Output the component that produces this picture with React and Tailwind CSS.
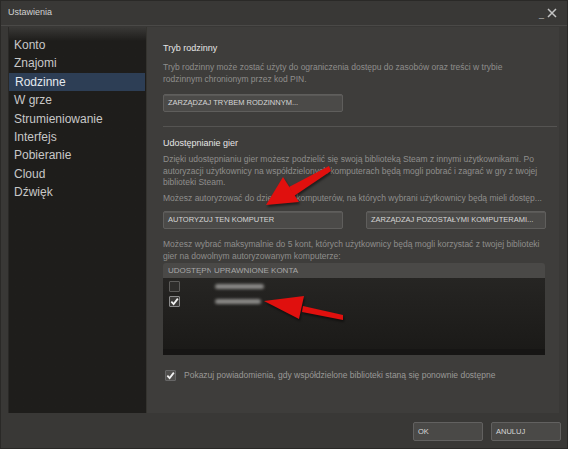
import React from 'react'

const font = { fontFamily: '"Liberation Sans", Arial, sans-serif' }

function Btn({ children, className = "" }) {
  return (
    <div className={"h-[18px] flex items-center px-[4px] bg-[#4b4a48] border border-[#5f5e5c] rounded-[2px] text-[7.5px] text-[#d6d6d6] shadow-[inset_0_1px_0_#5a5957] " + className}>
      {children}
    </div>
  )
}

function Check({ checked, className = "" }) {
  return (
    <div className={"w-[11px] h-[11px] border border-[#5d5c5a] rounded-[1px] flex items-center justify-center " + className}>
      {checked && (
        <svg width="9" height="9" viewBox="0 0 10 10">
          <path d="M1.5 5.2 L4 7.8 L8.7 1.8" fill="none" stroke="#f2f2f2" strokeWidth="2" />
        </svg>
      )}
    </div>
  )
}

const menu = ["Konto", "Znajomi", "Rodzinne", "W grze", "Strumieniowanie", "Interfejs", "Pobieranie", "Cloud", "Dźwięk"]

export default function App() {
  return (
    <div className="relative w-[568px] h-[449px] bg-[#393836] flex flex-col overflow-hidden border border-[#2a2927]" style={font}>
      {/* title bar */}
      <div className="h-[25px] flex items-center justify-between pl-[7px] pr-[10px] border-b border-[#4a4947]">
        <span className="text-[9px] text-[#d2d2d2]">Ustawienia</span>
        <div className="flex items-center gap-[3px] text-[#bdbdbd]">
          <span className="text-[9px] leading-none mt-[3px]">_</span>
          <svg width="10" height="10" viewBox="0 0 10 10">
            <path d="M1 1 L9 9 M9 1 L1 9" stroke="#c4c4c4" strokeWidth="1.5" />
          </svg>
        </div>
      </div>

      <div className="flex h-[387px] pl-[7px] pr-[8px] pt-[1px]">
        {/* sidebar */}
        <div className="w-[139px] bg-[#1e1d1b] border-r border-[#34332f] pt-[9px] bg-gradient-to-b from-[#3a3937] from-[0px] to-[#1e1d1b] to-[14px] shadow-[inset_1px_0_0_#2a2927]">
          {menu.map((m) => (
            <div
              key={m}
              className={
                "h-[18.4px] leading-[18.4px] pl-[6px] text-[12px] " +
                (m === "Rodzinne" ? "bg-[#2d3e55] text-[#e4e9ef] mx-[1px] pl-[5px]" : "text-[#c8c8c8]")
              }
            >
              {m}
            </div>
          ))}
        </div>

        {/* content */}
        <div className="flex-1 bg-[#3e3d3b] pl-[16px] pt-[15px] pr-[13px] flex flex-col">
          <div className="text-[9px] leading-[12px] text-[#e6e6e6]">Tryb rodzinny</div>
          <div className="mt-[7px] text-[8.5px] leading-[12px] text-[#8f8e8c] pr-[40px]">
            Tryb rodzinny może zostać użyty do ograniczenia dostępu do zasobów oraz treści w trybie rodzinnym chronionym przez kod PIN.
          </div>
          <Btn className="mt-[9px] w-[180px]">ZARZĄDZAJ TRYBEM RODZINNYM...</Btn>
          <div className="mt-[14px] h-px bg-[#555452] -mr-[11px]" />

          <div className="mt-[10px] text-[9px] leading-[12px] text-[#e6e6e6]">Udostępnianie gier</div>
          <div className="mt-[5px] text-[8.5px] leading-[11.7px] text-[#8f8e8c]">
            Dzięki udostępnianiu gier możesz podzielić się swoją biblioteką Steam z innymi użytkownikami. Po autoryzacji użytkownicy na współdzielonych komputerach będą mogli pobrać i zagrać w gry z twojej biblioteki Steam.
          </div>
          <div className="mt-[3px] text-[8.5px] leading-[12px] text-[#8f8e8c] whitespace-nowrap">
            Możesz autoryzować do dziesięciu komputerów, na których wybrani użytkownicy będą mieli dostęp...
          </div>
          <div className="mt-[7px] flex gap-[23px]">
            <Btn className="w-[180px]">AUTORYZUJ TEN KOMPUTER</Btn>
            <Btn className="w-[180px]">ZARZĄDZAJ POZOSTAŁYMI KOMPUTERAMI...</Btn>
          </div>
          <div className="mt-[9px] text-[8.5px] leading-[12px] text-[#8f8e8c] pr-[4px]">
            Możesz wybrać maksymalnie do 5 kont, których użytkownicy będą mogli korzystać z twojej biblioteki gier na dowolnym autoryzowanym komputerze:
          </div>

          {/* table */}
          <div className="mt-[1px] w-[382px]">
            <div className="h-[15px] bg-[#4a4947] rounded-t-[3px] flex items-center text-[8px] text-[#a8a8a8]">
              <span className="w-[48px] pl-[5px] overflow-hidden whitespace-nowrap">UDOSTĘPNI</span>
              <span className="pl-[3px]">UPRAWNIONE KONTA</span>
            </div>
            <div className="h-[77px] bg-gradient-to-b from-[#262523] to-[#1b1a18] border-b-[6px] border-[#161514] pt-[3px] flex flex-col gap-[4px]">
              <div className="flex items-center h-[11px]">
                <Check className="ml-[6px] bg-[#2e2d2b]" />
                <div className="ml-[35px] w-[49px] h-[5px] bg-[#8a8987] blur-[1.5px] rounded-full" />
              </div>
              <div className="flex items-center h-[11px]">
                <Check checked className="ml-[6px] bg-[#3a3937] border-[#8a8a8a]" />
                <div className="ml-[35px] w-[46px] h-[5px] bg-[#8a8987] blur-[1.5px] rounded-full" />
              </div>
            </div>
          </div>

          <div className="mt-[14px] flex items-center">
            <Check checked className="ml-[2px] bg-[#504f4d] border-[#666]" />
            <span className="ml-[8px] text-[8.5px] text-[#9a9997]">
              Pokazuj powiadomienia, gdy współdzielone biblioteki staną się ponownie dostępne
            </span>
          </div>
        </div>
      </div>

      {/* footer */}
      <div className="flex justify-end gap-[8px] pt-[9px] pr-[6px]">
        <div className="w-[70px] h-[19px] flex items-center pl-[4px] bg-[#4a4947] border border-[#626160] rounded-[2px] text-[7.5px] text-[#d8d8d8]">OK</div>
        <div className="w-[70px] h-[19px] flex items-center pl-[4px] bg-[#4a4947] border border-[#626160] rounded-[2px] text-[7.5px] text-[#d8d8d8]">ANULUJ</div>
      </div>

      {/* red arrows */}
      <svg className="absolute left-0 top-0 pointer-events-none" width="568" height="449" viewBox="0 0 568 449">
        <g fill="#e0100e" style={{ filter: "drop-shadow(1px 2px 1px rgba(0,0,0,0.5))" }}>
          <polygon points="328,165 330,170 293,195 288,186" />
          <polygon points="265,204 282,176 298,201" />
          <polygon points="342,314 342,319 301,311 302,305" />
          <polygon points="263,300 303,295 298,318" />
        </g>
      </svg>
    </div>
  )
}
